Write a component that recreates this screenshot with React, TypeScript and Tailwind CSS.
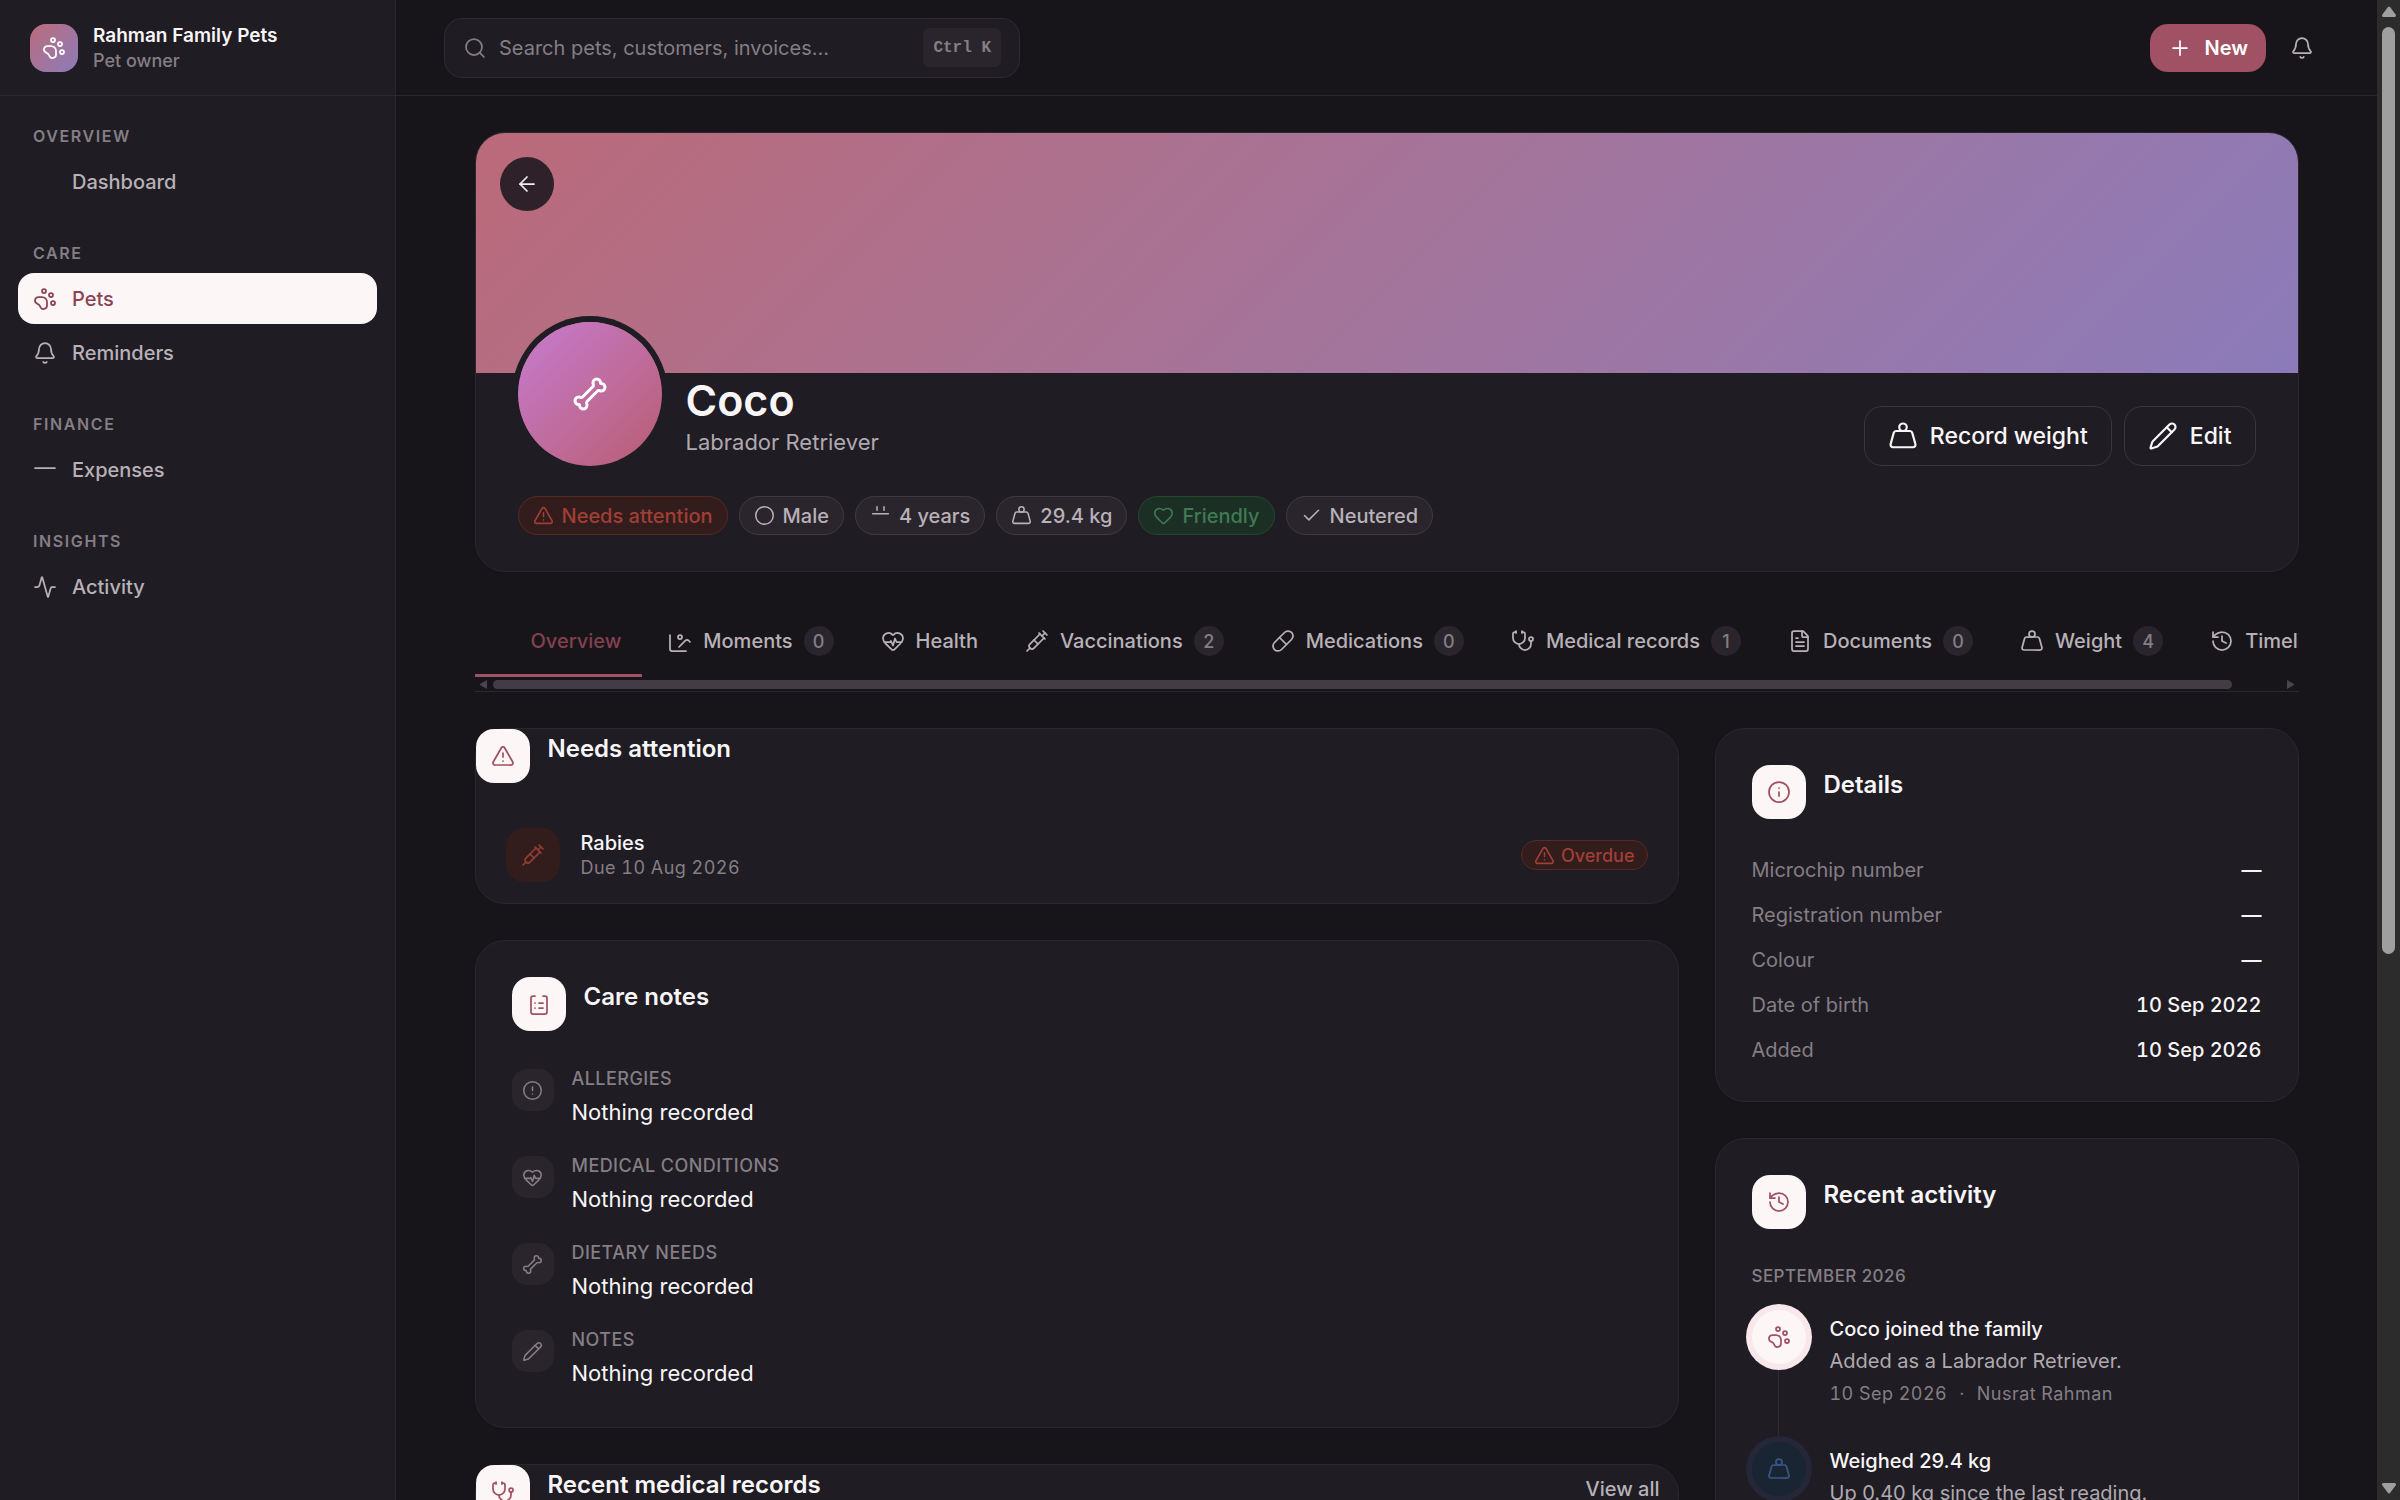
import type { ComponentType, ReactNode } from "react";
import {
  Activity,
  ArrowLeft,
  Bell,
  Bone,
  Check,
  Circle,
  CircleAlert,
  FileText,
  Heart,
  HeartPulse,
  History,
  Info,
  PawPrint,
  Pencil,
  Pill,
  Plus,
  Search,
  Stethoscope,
  Syringe,
  TriangleAlert,
  Weight,
} from "lucide-react";
import clsx from "clsx";

interface IconProps {
  className?: string;
  strokeWidth?: number;
}

type Icon = ComponentType<IconProps>;

const STROKE = 1.75;

function Glyph({
  className,
  strokeWidth = STROKE,
  children,
}: IconProps & { children?: ReactNode }) {
  return (
    <svg
      viewBox="0 0 24 24"
      fill="none"
      stroke="currentColor"
      strokeWidth={strokeWidth}
      strokeLinecap="round"
      strokeLinejoin="round"
      className={className}
      aria-hidden="true"
    >
      {children}
    </svg>
  );
}

const Blank: Icon = (props) => <Glyph {...props} />;

const Line: Icon = (props) => (
  <Glyph {...props}>
    <path d="M2 10h20" />
  </Glyph>
);

const Calendar: Icon = (props) => (
  <Glyph {...props}>
    <path d="M8 2v4" />
    <path d="M16 2v4" />
    <path d="M3 10h18" />
  </Glyph>
);

const Images: Icon = (props) => (
  <Glyph {...props}>
    <path d="M18 22H4a2 2 0 0 1-2-2V6" />
    <path d="m22 13-1.296-1.296a2.41 2.41 0 0 0-3.408 0L11 18" />
    <circle cx="12" cy="8" r="2" />
  </Glyph>
);

const Clipboard: Icon = (props) => (
  <Glyph {...props}>
    <path d="M16 4h2a2 2 0 0 1 2 2v14a2 2 0 0 1-2 2H6a2 2 0 0 1-2-2V6a2 2 0 0 1 2-2h2" />
    <path d="M12 11h4" />
    <path d="M12 16h4" />
    <path d="M8 11h.01" />
    <path d="M8 16h.01" />
  </Glyph>
);

const NAV: { label: string; items: { label: string; icon: Icon }[] }[] = [
  { label: "Overview", items: [{ label: "Dashboard", icon: Blank }] },
  {
    label: "Care",
    items: [
      { label: "Pets", icon: PawPrint },
      { label: "Reminders", icon: Bell },
    ],
  },
  { label: "Finance", items: [{ label: "Expenses", icon: Line }] },
  { label: "Insights", items: [{ label: "Activity", icon: Activity }] },
];

const CHIPS: { label: string; icon: Icon; tone: Tone }[] = [
  { label: "Needs attention", icon: TriangleAlert, tone: "danger" },
  { label: "Male", icon: Circle, tone: "neutral" },
  { label: "4 years", icon: Calendar, tone: "neutral" },
  { label: "29.4 kg", icon: Weight, tone: "neutral" },
  { label: "Friendly", icon: Heart, tone: "success" },
  { label: "Neutered", icon: Check, tone: "neutral" },
];

const TABS: { label: string; icon: Icon; count?: number }[] = [
  { label: "Overview", icon: Blank },
  { label: "Moments", icon: Images, count: 0 },
  { label: "Health", icon: HeartPulse },
  { label: "Vaccinations", icon: Syringe, count: 2 },
  { label: "Medications", icon: Pill, count: 0 },
  { label: "Medical records", icon: Stethoscope, count: 1 },
  { label: "Documents", icon: FileText, count: 0 },
  { label: "Weight", icon: Weight, count: 4 },
  { label: "Timeline", icon: History },
];

const CARE_NOTES: { label: string; icon: Icon }[] = [
  { label: "Allergies", icon: CircleAlert },
  { label: "Medical conditions", icon: HeartPulse },
  { label: "Dietary needs", icon: Bone },
  { label: "Notes", icon: Pencil },
];

const DETAILS = [
  ["Microchip number", "—"],
  ["Registration number", "—"],
  ["Colour", "—"],
  ["Date of birth", "10 Sep 2022"],
  ["Added", "10 Sep 2026"],
];

type Tone = "neutral" | "danger" | "success";

const TONES: Record<Tone, string> = {
  neutral: "border-[#403a42] bg-[#2a252c] text-[#b8b1b7]",
  danger: "border-[#562a23] bg-[#321d1c] text-[#a03f36]",
  success: "border-[#22482f] bg-[#1b2f24] text-[#3f7a54]",
};

function Sidebar() {
  return (
    <aside className="flex w-[396px] shrink-0 flex-col border-r border-[#2b272e] bg-[#1f1c23]">
      <div className="flex h-24 shrink-0 items-center gap-[15px] border-b border-[#2b272e] px-[30px]">
        <div className="flex size-12 items-center justify-center rounded-2xl bg-linear-135 from-[#bb6a79] to-[#8b7bba] text-white">
          <PawPrint className="size-6" strokeWidth={STROKE} />
        </div>
        <div>
          <div className="text-[19px] leading-[26px] font-semibold text-[#f8f5f7]">
            Rahman Family Pets
          </div>
          <div className="text-[18px] leading-6 font-medium text-[#857e85]">
            Pet owner
          </div>
        </div>
      </div>

      <nav className="flex flex-col gap-[34px] px-[18px] pt-7">
        {NAV.map((section) => (
          <div key={section.label}>
            <h2 className="mb-2 px-[15px] text-[16px] leading-6 font-semibold tracking-widest text-[#857e85] uppercase">
              {section.label}
            </h2>
            <div className="flex flex-col gap-[3px]">
              {section.items.map(({ label, icon: ItemIcon }) => (
                <a
                  key={label}
                  href="#"
                  className={clsx(
                    "flex h-[51px] items-center gap-[15px] rounded-2xl px-[15px] text-[20px] font-medium",
                    label === "Pets"
                      ? "bg-[#fcf6f7] text-[#8a4454]"
                      : "text-[#b8b1b7]",
                  )}
                >
                  <ItemIcon className="size-6" strokeWidth={STROKE} />
                  {label}
                </a>
              ))}
            </div>
          </div>
        ))}
      </nav>
    </aside>
  );
}

function TopBar() {
  return (
    <header className="flex h-24 shrink-0 items-center border-b border-[#2b272e] px-12">
      <label className="flex h-[60px] w-full max-w-[576px] items-center gap-3 rounded-[18px] border border-[#2f2b32] bg-[#1f1c23] px-[18px] text-[#857e85]">
        <Search className="size-6 shrink-0" strokeWidth={STROKE} />
        <input
          type="search"
          aria-label="Search"
          placeholder="Search pets, customers, invoices…"
          className="min-w-0 flex-1 bg-transparent text-[20px] outline-none placeholder:text-[#857e85]"
        />
        <kbd className="flex h-[39px] items-center rounded-md bg-[#2a252c] px-[10px] font-['Liberation_Mono',monospace] text-[16px] leading-6 font-bold">
          Ctrl K
        </kbd>
      </label>

      <div className="ml-auto flex items-center gap-[9px]">
        <button className="flex h-12 items-center gap-[13px] rounded-[18px] bg-[#a05264] px-[18px] text-[20px] font-semibold text-white">
          <Plus className="size-6" strokeWidth={STROKE} />
          New
        </button>
        <button
          aria-label="Notifications"
          className="flex size-[54px] items-center justify-center text-[#b8b1b7]"
        >
          <Bell className="size-6" strokeWidth={STROKE} />
        </button>
      </div>
    </header>
  );
}

function Hero() {
  return (
    <section className="relative overflow-hidden rounded-[30px] border border-[#2b272e] bg-[#1f1c23]">
      <div className="h-60 bg-linear-135 from-[#bb6a79] to-[#8b7bba]" />
      <button
        aria-label="Back"
        className="absolute top-6 left-6 flex size-[54px] items-center justify-center rounded-full bg-[#2e2129] text-[#f3eef1]"
      >
        <ArrowLeft className="size-6" strokeWidth={STROKE} />
      </button>

      <div className="relative -mt-[51px] px-[42px] pb-9">
        <div className="flex items-end gap-6">
          <div className="flex size-36 items-center justify-center rounded-full bg-linear-135 from-[#c77bd0] to-[#b95c70] text-white ring-6 ring-[#1f1c23]">
            <Bone className="size-9" strokeWidth={2} />
          </div>
          <div className="flex-1 pb-[6px]">
            <h1 className="text-[43px] leading-[48px] font-semibold text-[#f8f5f7]">
              Coco
            </h1>
            <p className="text-[22px] leading-9 text-[#b0a9b0]">
              Labrador Retriever
            </p>
          </div>
          <div className="flex gap-3">
            <HeroButton icon={Weight}>Record weight</HeroButton>
            <HeroButton icon={Pencil}>Edit</HeroButton>
          </div>
        </div>

        <div className="mt-[30px] flex gap-[11px]">
          {CHIPS.map(({ label, icon: ChipIcon, tone }) => (
            <span
              key={label}
              className={clsx(
                "flex h-[39px] items-center gap-2 rounded-full border px-[14px] text-[20px] font-medium",
                TONES[tone],
              )}
            >
              <ChipIcon className="size-[21px]" strokeWidth={STROKE} />
              {label}
            </span>
          ))}
        </div>
      </div>
    </section>
  );
}

function HeroButton({
  icon: ButtonIcon,
  children,
}: {
  icon: Icon;
  children: ReactNode;
}) {
  return (
    <button className="flex h-[60px] items-center gap-3 rounded-[18px] border border-[#3a353c] px-[23px] text-[23px] font-medium text-[#f8f5f7]">
      <ButtonIcon className="size-[30px]" strokeWidth={STROKE} />
      {children}
    </button>
  );
}

function Tabs() {
  return (
    <div className="border-b border-[#2b272e]">
      <div role="tablist" className="flex gap-[5px] overflow-hidden">
        {TABS.map(({ label, icon: TabIcon, count }, i) => (
          <button
            key={label}
            role="tab"
            aria-selected={i === 0}
            className={clsx(
              "flex h-[69px] shrink-0 items-center gap-[11px] border-b-3 px-[21px] text-[20px] font-medium",
              i === 0
                ? "border-[#a05264] text-[#84404f]"
                : "border-transparent text-[#b8b1b7]",
            )}
          >
            <TabIcon className="size-6" strokeWidth={STROKE} />
            {label}
            {count !== undefined && (
              <span className="flex size-[30px] items-center justify-center rounded-full bg-[#2a252c] text-[18px] text-[#857e85]">
                {count}
              </span>
            )}
          </button>
        ))}
      </div>

      {/* Horizontal scroll track */}
      <div
        className="flex h-[14px] items-center gap-[6px] px-[5px]"
        aria-hidden="true"
      >
        <svg viewBox="0 0 7 9" className="h-[9px] w-[7px] fill-[#4b444d]">
          <path d="M7 0v9L0 5V4z" />
        </svg>
        <div className="flex-1">
          <div className="h-[9px] w-36/37 rounded-full bg-[#443c45]" />
        </div>
        <svg viewBox="0 0 7 9" className="h-[9px] w-[7px] fill-[#4b444d]">
          <path d="M0 0v9l7-4V4z" />
        </svg>
      </div>
    </div>
  );
}

function Card({
  children,
  className,
}: {
  children: ReactNode;
  className?: string;
}) {
  return (
    <section
      className={clsx(
        "rounded-[30px] border border-[#2b272e] bg-[#1f1c23]",
        className,
      )}
    >
      {children}
    </section>
  );
}

function CardHeader({
  icon: HeaderIcon,
  title,
  action,
}: {
  icon: Icon;
  title: string;
  action?: ReactNode;
}) {
  return (
    <div className="flex items-start gap-[18px]">
      <div className="flex size-[54px] items-center justify-center rounded-[18px] bg-[#fcf6f7] text-[#a05264]">
        <HeaderIcon className="size-6" strokeWidth={STROKE} />
      </div>
      <h3 className="flex-1 text-[24px] leading-10 font-semibold text-[#f8f5f7]">
        {title}
      </h3>
      {action}
    </div>
  );
}

function NeedsAttention() {
  return (
    <Card>
      <CardHeader icon={TriangleAlert} title="Needs attention" />
      <div className="mt-6 flex items-center gap-[21px] px-[30px] py-[21px]">
        <div className="flex size-[54px] items-center justify-center rounded-[18px] bg-[#321d1c] text-[#8f3f30]">
          <Syringe className="size-6" strokeWidth={STROKE} />
        </div>
        <div className="flex-1">
          <div className="text-[20px] leading-[26px] font-medium text-[#f8f5f7]">
            Rabies
          </div>
          <div className="text-[18px] leading-6 tracking-wide text-[#857e85] tabular-nums">
            Due 10 Aug 2026
          </div>
        </div>
        <span
          className={clsx(
            "flex h-[30px] items-center gap-[6px] rounded-full border px-3 text-[18px] font-medium",
            TONES.danger,
          )}
        >
          <TriangleAlert className="size-[21px]" strokeWidth={STROKE} />
          Overdue
        </span>
      </div>
    </Card>
  );
}

function CareNotes() {
  return (
    <Card className="p-9">
      <CardHeader icon={Clipboard} title="Care notes" />
      <dl className="mt-9 flex flex-col gap-6">
        {CARE_NOTES.map(({ label, icon: NoteIcon }) => (
          <div key={label} className="flex items-start gap-[18px]">
            <div className="mt-[2px] flex size-[42px] items-center justify-center rounded-[15px] bg-[#2a252c] text-[#857e85]">
              <NoteIcon className="size-[21px]" strokeWidth={STROKE} />
            </div>
            <div>
              <dt className="text-[18px] leading-6 font-medium tracking-wide text-[#857e85] uppercase">
                {label}
              </dt>
              <dd className="mt-[3px] text-[22px] leading-9 text-[#f8f5f7]">
                Nothing recorded
              </dd>
            </div>
          </div>
        ))}
      </dl>
    </Card>
  );
}

function MedicalRecords() {
  return (
    <Card>
      <CardHeader
        icon={Stethoscope}
        title="Recent medical records"
        action={
          <button className="h-12 px-[18px] text-[20px] font-medium text-[#b8b1b7]">
            View all
          </button>
        }
      />
      <div className="h-40" />
    </Card>
  );
}

function Details() {
  return (
    <Card className="p-9">
      <CardHeader icon={Info} title="Details" />
      <dl className="mt-9 flex flex-col gap-[15px]">
        {DETAILS.map(([label, value]) => (
          <div
            key={label}
            className="flex justify-between text-[20px] leading-[30px]"
          >
            <dt className="text-[#857e85]">{label}</dt>
            <dd className="font-medium text-[#f8f5f7] tabular-nums">{value}</dd>
          </div>
        ))}
      </dl>
    </Card>
  );
}

function RecentActivity() {
  return (
    <Card className="p-9">
      <CardHeader icon={History} title="Recent activity" />
      <h4 className="mt-[35px] text-[17px] leading-6 font-medium tracking-wide text-[#857e85] uppercase">
        September 2026
      </h4>
      <div className="mt-[22px]">
        <ActivityItem
          icon={PawPrint}
          iconClass="bg-[#fcf6f7] text-[#a05264] ring-[#f8e8eb]"
          title="Coco joined the family"
          text="Added as a Labrador Retriever."
        />
        <ActivityItem
          icon={Weight}
          iconClass="bg-[#1a2533] text-[#3b5585] ring-[#252637]"
          title="Weighed 29.4 kg"
          text="Up 0.40 kg since the last reading."
        />
      </div>
    </Card>
  );
}

function ActivityItem({
  icon: ItemIcon,
  iconClass,
  title,
  text,
}: {
  icon: Icon;
  iconClass: string;
  title: string;
  text: string;
}) {
  return (
    <div className="flex gap-6">
      <div className="flex flex-col items-center gap-[6px]">
        <div
          className={clsx(
            "flex size-[54px] items-center justify-center rounded-full ring-6",
            iconClass,
          )}
        >
          <ItemIcon className="size-6" strokeWidth={STROKE} />
        </div>
        <div className="w-px flex-1 bg-[#302b33]" />
      </div>
      <div className="pt-1 pb-9">
        <div className="text-[20px] leading-[30px] font-medium text-[#f8f5f7]">
          {title}
        </div>
        <div className="mt-[2px] text-[20px] leading-[30px] text-[#b0a9b0]">
          {text}
        </div>
        <div className="mt-[6px] flex gap-3 text-[18px] leading-6 tracking-wide text-[#857e85] tabular-nums">
          <span>10 Sep 2026</span>
          <span>·</span>
          <span>Nusrat Rahman</span>
        </div>
      </div>
    </div>
  );
}

function PageScrollbar() {
  return (
    <div
      className="flex h-full w-[23px] shrink-0 flex-col items-center bg-[#2c2c2c] py-[6px]"
      aria-hidden="true"
    >
      <svg viewBox="0 0 14 11" className="h-[11px] w-[14px] fill-[#9f9f9f]">
        <path d="M6 1Q7 0 8 1l6 8q0 2-1 2H1Q0 11 0 9z" />
      </svg>
      <div className="mt-[10px] w-[13px] flex-1">
        <div className="h-7/11 rounded-full bg-[#9f9f9f]" />
      </div>
      <svg viewBox="0 0 14 11" className="h-[11px] w-[14px] fill-[#9f9f9f]">
        <path d="M6 10q1 1 2 0l6-8q0-2-1-2H1Q0 0 0 2z" />
      </svg>
    </div>
  );
}

export default function App() {
  return (
    <div className="flex h-screen overflow-hidden bg-[#17151a] font-['Inter',sans-serif]">
      <Sidebar />
      <div className="flex min-w-0 flex-1 flex-col">
        <TopBar />
        <main className="min-h-0 flex-1 overflow-hidden">
          <div className="mx-auto flex max-w-[1920px] flex-col gap-9 px-12 py-9">
            <Hero />
            <Tabs />
            <div className="grid grid-cols-12 items-start gap-9">
              <div className="col-span-8 flex flex-col gap-9">
                <NeedsAttention />
                <CareNotes />
                <MedicalRecords />
              </div>
              <div className="col-span-4 flex flex-col gap-9">
                <Details />
                <RecentActivity />
              </div>
            </div>
          </div>
        </main>
      </div>
      <PageScrollbar />
    </div>
  );
}
